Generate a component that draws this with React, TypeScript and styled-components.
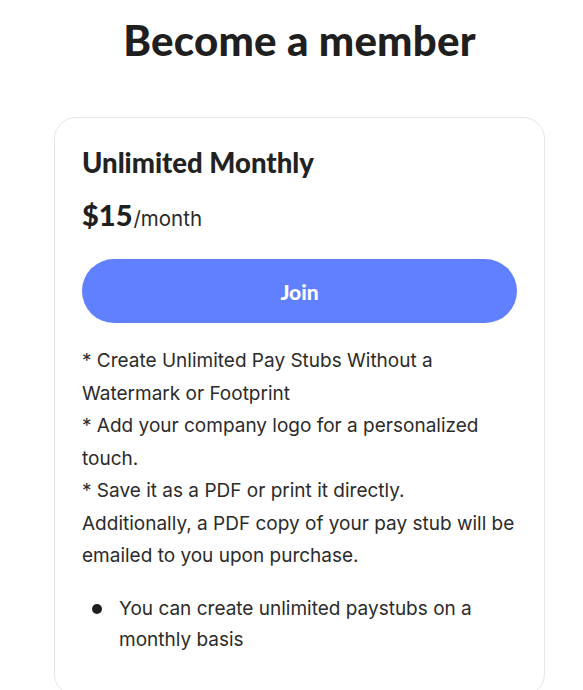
import styled, { createGlobalStyle } from "styled-components";

const GlobalStyle = createGlobalStyle`
    body {
        margin: 0;
        background: #ffffff;
        font-family: "Inter", "Liberation Sans", sans-serif;
        color: #2b2b2b;
    }
`

const features = [
    "* Create Unlimited Pay Stubs Without a Watermark or Footprint",
    "* Add your company logo for a personalized touch.",
    "* Save it as a PDF or print it directly. Additionally, a PDF copy of your pay stub will be emailed to you upon purchase.",
]

export default function App() {
    return (
        <>
            <GlobalStyle />
            <Page>
                <Title>Become a member</Title>
                <Card>
                    <PlanName>Unlimited Monthly</PlanName>
                    <Price>
                        <Amount>$15</Amount>
                        <Period>/month</Period>
                    </Price>
                    <JoinButton>Join</JoinButton>
                    <Features>
                        {features.map((text, index) => (
                            <Feature key={index}>{text}</Feature>
                        ))}
                    </Features>
                    <BulletList>
                        <BulletItem>You can create unlimited paystubs on a monthly basis</BulletItem>
                    </BulletList>
                </Card>
            </Page>
        </>
    )
}

const Page = styled.div`
    display: flex;
    flex-direction: column;
    align-items: center;
    padding: 15px 38px 0 54px;
`
const Title = styled.h1`
    margin: 0 0 52px;
    font-family: "Lato", sans-serif;
    font-weight: 900;
    font-size: 42px;
    line-height: 50px;
    color: #1f1f1f;
    letter-spacing: 0.2px;
`
const Card = styled.div`
    box-sizing: border-box;
    width: 491px;
    border: 1px solid #e6e6e6;
    border-radius: 22px;
    padding: 28px 27px 40px;
`
const PlanName = styled.h2`
    margin: 0;
    font-family: "Lato", sans-serif;
    font-weight: 900;
    font-size: 27.5px;
    line-height: 34px;
    color: #222;
`
const Price = styled.div`
    margin: 18px 0 0;
    display: flex;
    align-items: baseline;
    line-height: 34px;
`
const Amount = styled.span`
    font-family: "Lato", sans-serif;
    font-weight: 900;
    font-size: 29px;
    color: #1f1f1f;
`
const Period = styled.span`
    margin-left: 1px;
    font-size: 20.5px;
    color: #2b2b2b;
`
const JoinButton = styled.button`
    display: block;
    width: 100%;
    height: 64px;
    margin: 23px 0 22px;
    border: none;
    border-radius: 32px;
    background-color: #6080ff;
    color: #ffffff;
    font-family: "Lato", sans-serif;
    font-weight: 900;
    font-size: 21px;
    cursor: pointer;
`
const Features = styled.div`
    font-size: 19px;
    line-height: 32.5px;
`
const Feature = styled.p`
    margin: 0;
`
const BulletList = styled.ul`
    margin: 20px 0 0;
    padding: 0;
    list-style: none;
    font-size: 19px;
    line-height: 31px;
`
const BulletItem = styled.li`
    position: relative;
    padding-left: 37px;

    &::before {
        content: "";
        position: absolute;
        left: 10px;
        top: 11px;
        width: 10px;
        height: 10px;
        border-radius: 50%;
        background: #1f1f1f;
    }
`
